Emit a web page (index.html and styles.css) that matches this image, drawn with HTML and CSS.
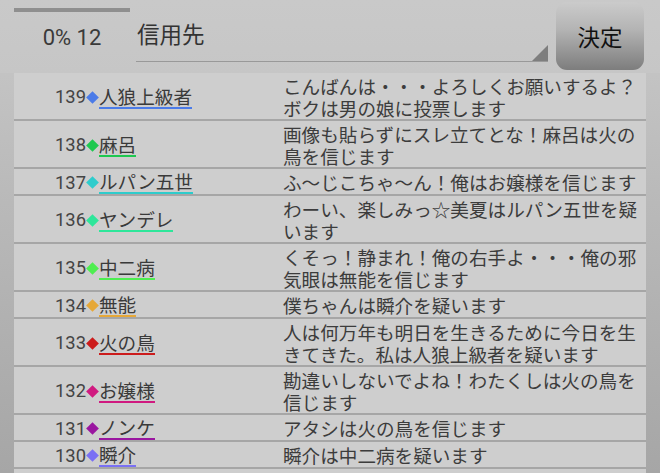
FILE: index.html
```html
<!DOCTYPE html>
<html lang="ja">
<head>
    <meta charset="UTF-8">
    <title>投票ログ</title>
    <link rel="stylesheet" href="styles.css">
</head>
<body>
    <div class="header">
        <div class="score">
            <div class="progress"></div>
            <div class="score-text">0% 12</div>
        </div>
        <div class="target">信用先</div>
        <button class="decide">決定</button>
    </div>

    <div class="log">
        <div class="row">
            <div class="who"><span class="num">139</span><span class="dia c-blue"></span><span class="name c-blue">人狼上級者</span></div>
            <div class="msg">こんばんは・・・よろしくお願いするよ？ボクは男の娘に投票します</div>
        </div>
        <div class="row">
            <div class="who"><span class="num">138</span><span class="dia c-green"></span><span class="name c-green">麻呂</span></div>
            <div class="msg">画像も貼らずにスレ立てとな！麻呂は火の鳥を信じます</div>
        </div>
        <div class="row">
            <div class="who"><span class="num">137</span><span class="dia c-cyan"></span><span class="name c-cyan">ルパン五世</span></div>
            <div class="msg">ふ〜じこちゃ〜ん！俺はお嬢様を信じます</div>
        </div>
        <div class="row">
            <div class="who"><span class="num">136</span><span class="dia c-sea"></span><span class="name c-sea">ヤンデレ</span></div>
            <div class="msg">わーい、楽しみっ☆美夏はルパン五世を疑います</div>
        </div>
        <div class="row">
            <div class="who"><span class="num">135</span><span class="dia c-lime"></span><span class="name c-lime">中二病</span></div>
            <div class="msg">くそっ！静まれ！俺の右手よ・・・俺の邪気眼は無能を信じます</div>
        </div>
        <div class="row">
            <div class="who"><span class="num">134</span><span class="dia c-orange"></span><span class="name c-orange">無能</span></div>
            <div class="msg">僕ちゃんは瞬介を疑います</div>
        </div>
        <div class="row">
            <div class="who"><span class="num">133</span><span class="dia c-red"></span><span class="name c-red">火の鳥</span></div>
            <div class="msg">人は何万年も明日を生きるために今日を生きてきた。私は人狼上級者を疑います</div>
        </div>
        <div class="row">
            <div class="who"><span class="num">132</span><span class="dia c-pink"></span><span class="name c-pink">お嬢様</span></div>
            <div class="msg">勘違いしないでよね！わたくしは火の鳥を信じます</div>
        </div>
        <div class="row">
            <div class="who"><span class="num">131</span><span class="dia c-purple"></span><span class="name c-purple">ノンケ</span></div>
            <div class="msg">アタシは火の鳥を信じます</div>
        </div>
        <div class="row">
            <div class="who"><span class="num">130</span><span class="dia c-violet"></span><span class="name c-violet">瞬介</span></div>
            <div class="msg">瞬介は中二病を疑います</div>
        </div>
    </div>
</body>
</html>
```

FILE: styles.css
```css
* {
    box-sizing: border-box;
    margin: 0;
    padding: 0;
}

body {
    width: 660px;
    height: 473px;
    overflow: hidden;
    background: linear-gradient(#c9c9c9, #bababa 40%, #a6a6a6);
    font-family: Roboto, "Noto Sans CJK JP", sans-serif;
    color: #3a3a3a;
}

/* top bar */
.header {
    display: flex;
    height: 73px;
    padding: 0 16px 0 14px;
    background: linear-gradient(#c9c9c9, #c6c6c6);
}

.score {
    width: 116px;
    display: flex;
    flex-direction: column;
}

.progress {
    height: 4px;
    margin-top: 8px;
    background-color: #8f8f8f;
}

.score-text {
    margin-top: 13px;
    text-align: center;
    font-size: 22px;
    line-height: 26px;
    color: #3a3a3a;
}

.target {
    flex: 1;
    position: relative;
    height: 62px;
    margin-left: 6px;
    padding: 18px 0 0 1px;
    font-family: "Noto Sans CJK JP", sans-serif;
    font-size: 22.5px;
    line-height: 30px;
    color: #333;
    border-bottom: 1px solid #999;
}

.target::after {
    content: "";
    position: absolute;
    right: 0;
    bottom: 0;
    border-style: solid;
    border-width: 0 0 16px 16px;
    border-color: transparent transparent #7e7e7e transparent;
}

.decide {
    width: 88px;
    height: 68px;
    margin: 2px 0 0 8px;
    border: none;
    border-radius: 11px;
    background: linear-gradient(#cbcbcb, #b4b4b4 40%, #7d7d7d);
    font-family: "Noto Sans CJK JP", sans-serif;
    font-size: 22.5px;
    color: #111;
}

/* vote log */
.log {
    margin: 0 14px;
    padding-bottom: 12px;
    background-color: #cecece;
}

.row {
    display: grid;
    grid-template-columns: 269px 1fr;
    border-bottom: 2px solid #a6a6a6;
}

.who {
    display: flex;
    align-items: center;
    min-height: 24.5px;
    padding: 2px 0 0 41px;
    font-size: 18.4px;
    line-height: 20px;
}

.num {
    color: #444;
}

.dia {
    width: 9px;
    height: 9px;
    margin: 0 2px;
    transform: rotate(45deg);
}

.name {
    font-family: "Noto Sans CJK JP", sans-serif;
    font-size: 18.6px;
    line-height: 20px;
    color: #3a3a3a;
    border-bottom: 2px solid;
    padding-bottom: 1px;
}

.msg {
    height: 100%;
    padding: 2px 8px 0 0;
    font-family: "Noto Sans CJK JP", sans-serif;
    font-size: 18.6px;
    line-height: 22px;
    color: #3c3c3c;
}

.dia.c-blue { background-color: #4b7be8; }
.dia.c-green { background-color: #1ec850; }
.dia.c-cyan { background-color: #2ecccc; }
.dia.c-sea { background-color: #2ee69a; }
.dia.c-lime { background-color: #4eee50; }
.dia.c-orange { background-color: #e6a838; }
.dia.c-red { background-color: #cc1c1c; }
.dia.c-pink { background-color: #d01a80; }
.dia.c-purple { background-color: #9a16a0; }
.dia.c-violet { background-color: #7a70f4; }

.name.c-blue { border-color: #4b7be8; }
.name.c-green { border-color: #1ec850; }
.name.c-cyan { border-color: #2ecccc; }
.name.c-sea { border-color: #2ee69a; }
.name.c-lime { border-color: #4eee50; }
.name.c-orange { border-color: #e6a838; }
.name.c-red { border-color: #cc1c1c; }
.name.c-pink { border-color: #d01a80; }
.name.c-purple { border-color: #9a16a0; }
.name.c-violet { border-color: #7a70f4; }
```
